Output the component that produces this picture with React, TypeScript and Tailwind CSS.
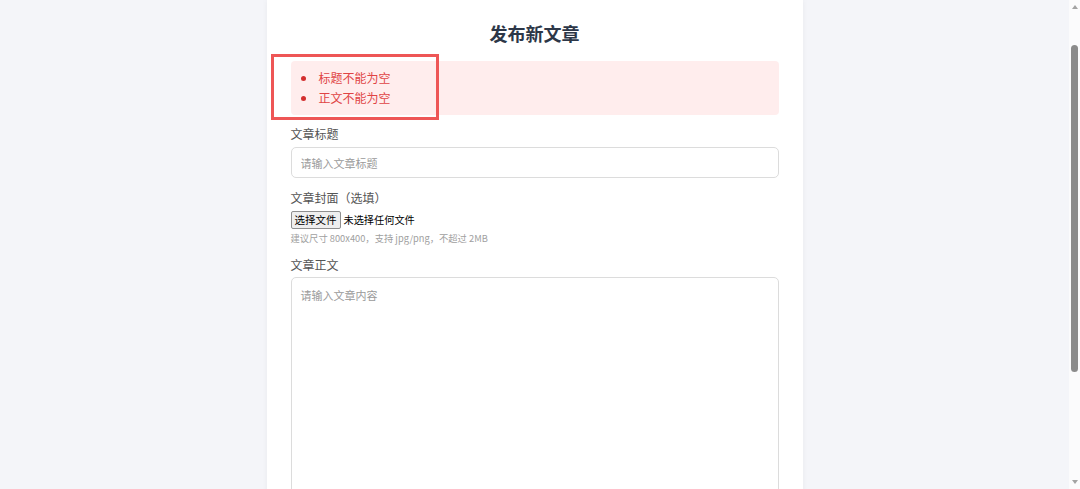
const errors = ["标题不能为空", "正文不能为空"];

const cjk = { fontFamily: '"Noto Sans CJK SC", "Noto Sans", sans-serif' };

function ScrollBar() {
  return (
    <div className="flex h-full w-[11px] shrink-0 flex-col items-center bg-[#fbfbfc]">
      <div className="mt-[5px] h-0 w-0 border-x-[3px] border-b-[4px] border-x-transparent border-b-[#a3a3a3]" />
      <div className="mt-[36px] h-[327px] w-[7px] rounded-full bg-[#8b8b8b]" />
      <div className="flex-1" />
      <div className="mb-[5px] h-0 w-0 border-x-[3px] border-t-[4px] border-x-transparent border-t-[#a3a3a3]" />
    </div>
  );
}

export default function App() {
  return (
    <div className="flex h-[489px] w-full overflow-hidden bg-[#f4f5f9]" style={cjk}>
      <main className="flex flex-1 justify-center">
        <section className="relative h-[560px] w-[536px] bg-white px-6 pt-5 shadow-[0_0_6px_rgba(0,0,0,0.05)]">
          <h1 className="text-center text-[18px] font-bold leading-[26px] text-[#2d3748]">
            发布新文章
          </h1>

          <ul className="mt-[15px] list-disc rounded bg-[#ffeded] py-[7px] pl-[26px] text-[12px] leading-5 text-[#e04444] marker:text-[#d32f2f]">
            {errors.map((e) => (
              <li key={e} className="pl-[2px]">{e}</li>
            ))}
          </ul>

          {/* highlight frame around the error list */}
          <div className="pointer-events-none absolute left-[4px] top-[54px] h-[66px] w-[168px] border-[3px] border-[#ee5656]" />

          <label className="mt-[10px] block text-[12px] leading-[18px] text-[#555]">文章标题</label>
          <input
            type="text"
            placeholder="请输入文章标题"
            className="mt-1 block h-[31px] w-full rounded-[5px] border border-[#dcdcdc] px-[9px] text-[11px] outline-none placeholder:text-[#9a9a9a]"
          />

          <label className="mt-[11px] block text-[12px] leading-[18px] text-[#555]">文章封面（选填）</label>
          <div className="mt-1 flex items-center gap-[3px] text-[10.2px] text-black">
            <button className="h-[18px] rounded-[2px] border border-[#8f8f8f] bg-[#efefef] px-[3px] text-[10.5px] leading-[16px]">
              选择文件
            </button>
            <span>未选择任何文件</span>
          </div>
          <p className="mt-[2px] text-[9.3px] leading-[14px] text-[#a0a0a0]">
            建议尺寸 800x400，支持 jpg/png，不超过 2MB
          </p>

          <label className="mt-[11px] block text-[12px] leading-[18px] text-[#555]">文章正文</label>
          <textarea
            placeholder="请输入文章内容"
            className="mt-[3px] block h-[260px] w-full resize-none rounded-[5px] border border-[#dcdcdc] px-[9px] py-[9px] text-[11px] outline-none placeholder:text-[#9a9a9a]"
          />
        </section>
      </main>
      <ScrollBar />
    </div>
  );
}
